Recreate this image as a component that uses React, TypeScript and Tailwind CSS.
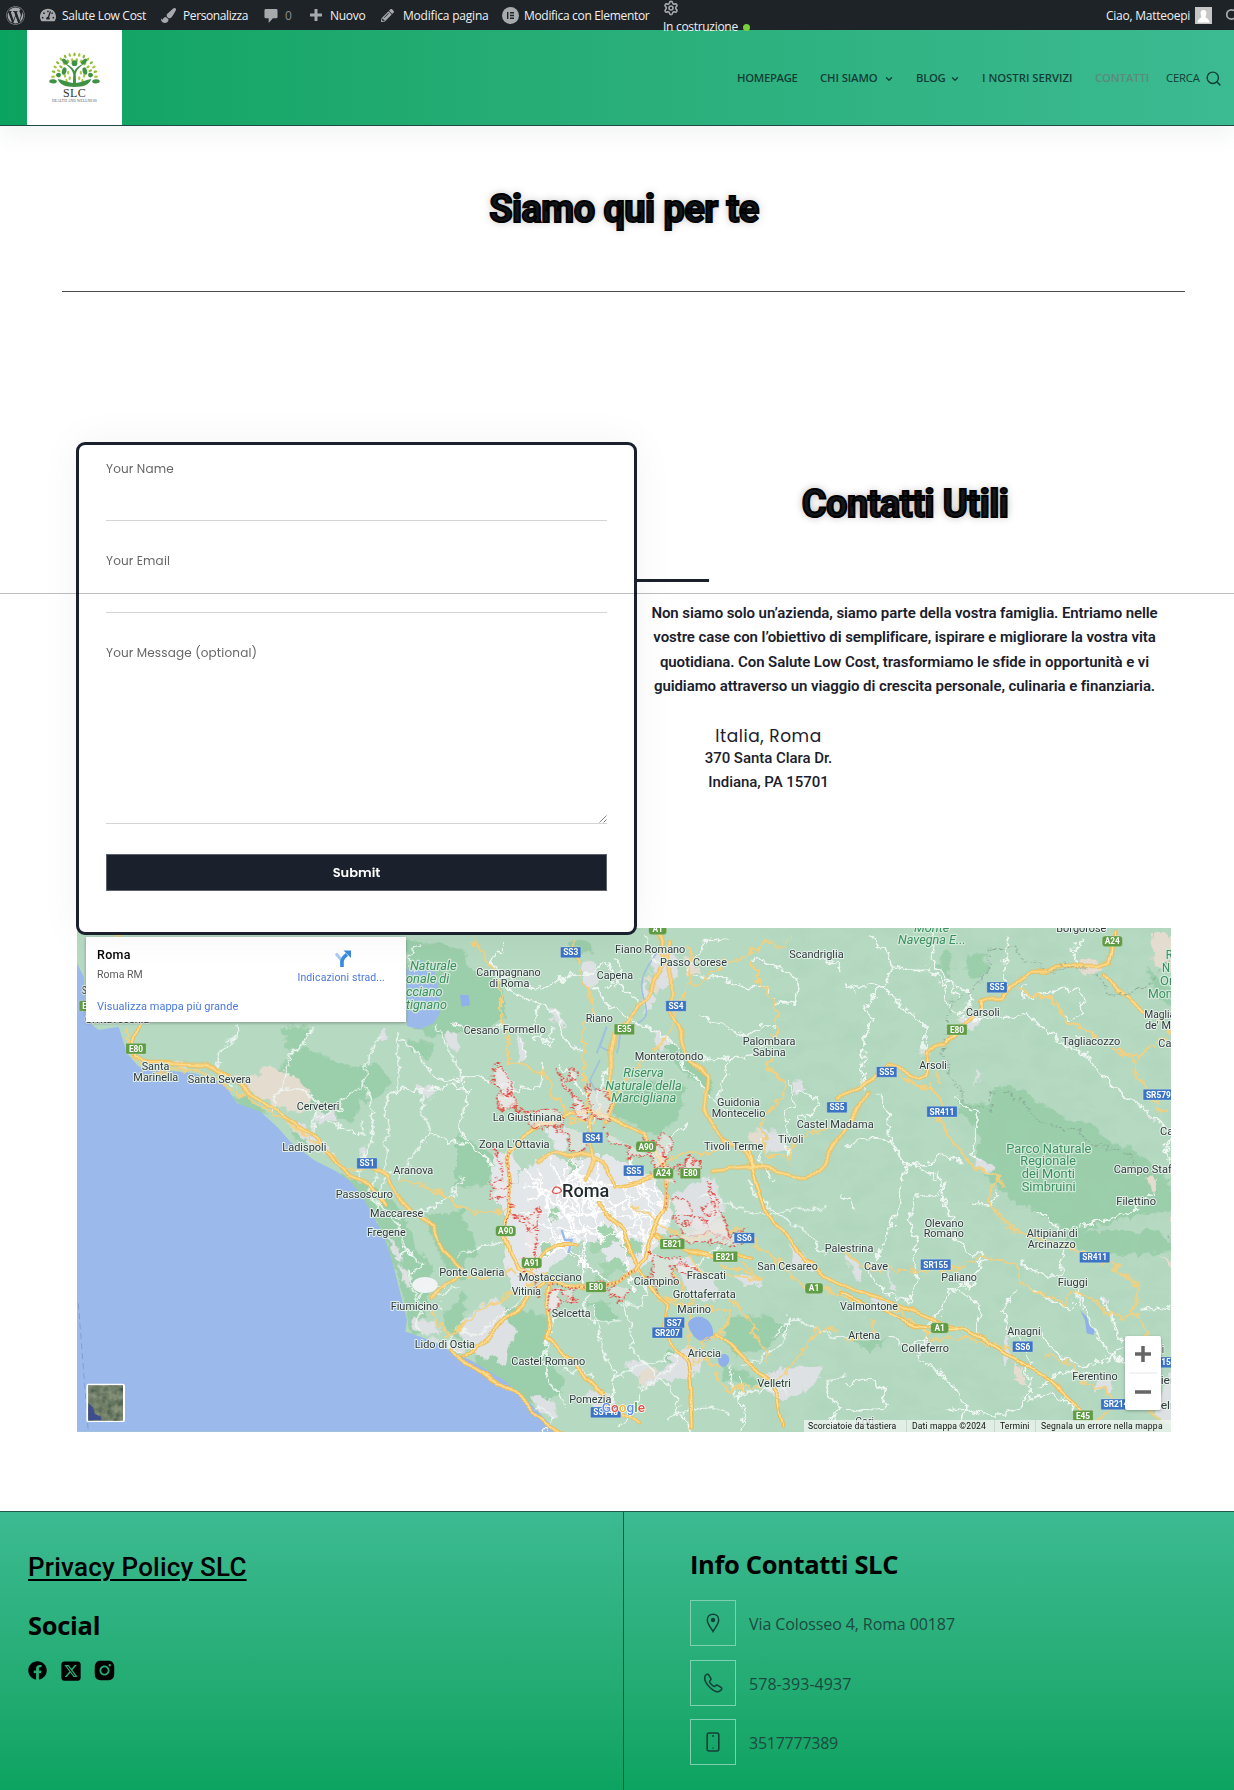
import React from "react";
import {
  FaWordpress,
  FaTachometerAlt,
  FaPaintBrush,
  FaPencilAlt,
  FaFacebook,
} from "react-icons/fa";
import { FaSquareXTwitter } from "react-icons/fa6";
import { AiFillInstagram } from "react-icons/ai";
import { ChevronDown, Search, Settings } from "lucide-react";

function Logo() {
  const leaves: number[][] = [];
  for (let i = 0; i < 15; i++) {
    const a = Math.PI + (Math.PI * i) / 14;
    leaves.push([32 + Math.cos(a) * 27, 31 + Math.sin(a) * 28, (a * 180) / Math.PI]);
  }
  for (let i = 0; i < 12; i++) {
    const a = Math.PI + (Math.PI * (i + 0.5)) / 12;
    leaves.push([32 + Math.cos(a) * 21.5, 32 + Math.sin(a) * 22, (a * 180) / Math.PI]);
  }
  return (
    <svg viewBox="0 0 64 44" className="h-[35px] w-[51px]" aria-hidden="true">
      {leaves.map(([x, y, r], i) => (
        <ellipse key={i} cx={x} cy={y} rx="2.4" ry="1.5" fill={i % 2 ? "#8dba3a" : "#a9c83c"} transform={`rotate(${r} ${x} ${y})`} />
      ))}
      {[[24, 26], [40, 26], [20, 30], [44, 30], [26, 33], [38, 33], [22, 36], [42, 36]].map(([x, y], i) => (
        <ellipse key={i} cx={x} cy={y} rx="1.4" ry="2.4" fill="#a9c83c" />
      ))}
      <g fill="#3f9146">
        <circle cx="32" cy="14" r="3.6" />
        <circle cx="12" cy="29" r="3" />
        <circle cx="52" cy="29" r="3" />
        <ellipse cx="20" cy="12" rx="4.5" ry="2.4" transform="rotate(45 20 12)" />
        <ellipse cx="44" cy="12" rx="4.5" ry="2.4" transform="rotate(-45 44 12)" />
        <ellipse cx="19" cy="24" rx="2.8" ry="4.8" transform="rotate(15 19 24)" />
        <ellipse cx="45" cy="24" rx="2.8" ry="4.8" transform="rotate(-15 45 24)" />
        <ellipse cx="5" cy="37" rx="4.8" ry="2.6" transform="rotate(5 5 37)" />
        <ellipse cx="59" cy="37" rx="4.8" ry="2.6" transform="rotate(-5 59 37)" />
        <path d="M11 34c5 1 13 4 19 5l.5-11c-1-6-6-10-11-14 6 2 11 6 12.500 10 1.500-4 6.500-8 12.500-10-5 4-10 8-11 14l.5 11c6-1 14-4 19-5-2 7-9 10-21 10S13 41 11 34z" />
      </g>
    </svg>
  );
}

function AdminBar() {
  return (
    <div className="relative z-30 flex h-[30px] items-center overflow-visible bg-[#1d2327] font-['Open_Sans','Noto_Sans',sans-serif] text-[12px] leading-none whitespace-nowrap text-[#f0f0f1]">
      <FaWordpress className="ml-[6px] size-[19px] shrink-0 text-[#a7aaad]" />
      <FaTachometerAlt className="ml-[15px] size-[16px] shrink-0 text-[#a7aaad]" />
      <span className="mt-px ml-[6px] w-[99px] shrink-0 tracking-[-0.3px]">Salute Low Cost</span>
      <FaPaintBrush className="size-[15px] shrink-0 text-[#a7aaad]" />
      <span className="mt-px ml-[7px] w-[81px] shrink-0 tracking-[-0.4px]">Personalizza</span>
      <svg viewBox="0 0 14 15" className="mt-px size-[14px] shrink-0" fill="#a7aaad">
        <path d="M1.500 0h11Q14 0 14 1.500v7Q14 10 12.500 10H9l-4.500 5V10H1.500Q0 10 0 8.500v-7Q0 0 1.500 0z" />
      </svg>
      <span className="mt-px ml-[7px] w-[24px] shrink-0 text-[#8c8f94]">0</span>
      <svg viewBox="0 0 14 14" className="size-[14px] shrink-0" fill="#a7aaad">
        <path d="M5.500 1h3v4.500H13v3H8.500V13h-3V8.500H1v-3h4.500z" />
      </svg>
      <span className="mt-px ml-[7px] w-[51px] shrink-0 tracking-[-0.3px]">Nuovo</span>
      <FaPencilAlt className="size-[13px] shrink-0 text-[#a7aaad]" />
      <span className="mt-px ml-[9px] w-[99px] shrink-0 tracking-[-0.2px]">Modifica pagina</span>
      <svg viewBox="0 0 17 17" className="size-[17px] shrink-0">
        <circle cx="8.500" cy="8.500" r="8.500" fill="#a7aaad" />
        <path d="M5.700 5v7M8 5.700h4M8 8.500h4M8 11.300h4" stroke="#1d2327" strokeWidth="1.400" />
      </svg>
      <span className="mt-px ml-[5px] w-[139px] shrink-0 tracking-[-0.32px]">Modifica con Elementor</span>
      <div className="flex h-[31px] w-[90px] shrink-0 flex-col">
        <Settings className="size-[16px] shrink-0 text-[#a7aaad]" strokeWidth={2.4} />
        <div className="mt-[5px] flex h-[10px] items-start gap-[5px] overflow-hidden">
          <span className="tracking-[-0.3px]">In costruzione</span>
          <i className="mt-[3px] size-[7px] shrink-0 rounded-full bg-[#7ad03a]" />
        </div>
      </div>
      <span className="mt-px ml-auto w-[89px] shrink-0 tracking-[-0.25px]">Ciao, Matteoepi</span>
      <svg viewBox="0 0 17 17" className="size-[17px] shrink-0">
        <rect width="17" height="17" fill="#c6c6c6" />
        <path d="M8.500 3c2 0 3 1.500 2.900 3.500-.1 1.600-.9 2.500-.9 3.400 0 1 3.500 1.300 4 5.600h-12c.5-4.300 4-4.600 4-5.600 0-.9-.8-1.800-.9-3.400C5.500 4.500 6.500 3 8.500 3z" fill="#fff" />
      </svg>
      <div className="ml-[13px] w-[9px] shrink-0 overflow-hidden">
        <Search className="size-[14px] text-[#a7aaad]" strokeWidth={3} />
      </div>
    </div>
  );
}

function Header() {
  return (
    <header className="relative z-20 flex h-[96px] items-center border-b border-[#1f4a43] bg-linear-to-r from-[#0ba360] to-[#3cba92] font-['Open_Sans','Noto_Sans',sans-serif] text-[11.3px] font-semibold whitespace-nowrap text-[#123f37] shadow-[0_10px_20px_rgba(44,62,80,0.06)]">
      <div className="ml-[27px] flex h-[95px] w-[95px] shrink-0 flex-col items-center bg-white pt-[22px]">
        <Logo />
        <span className="mt-px font-['Liberation_Serif',serif] text-[12px] leading-[11px] font-normal tracking-[0.4px] text-[#333]">SLC</span>
        <span className="font-['Liberation_Serif',serif] text-[3.6px] leading-[4px] font-normal tracking-[0.15px] text-[#555]">HEALTH AND WELLNESS</span>
      </div>
      <nav className="mt-[2px] ml-auto flex items-center">
        <a className="w-[83px] tracking-[-0.3px]">HOMEPAGE</a>
        <a className="flex w-[96px] items-center">
          <span className="w-[64px] tracking-[-0.1px]">CHI SIAMO</span>
          <ChevronDown className="size-[10px]" strokeWidth={3.2} />
        </a>
        <a className="flex w-[66px] items-center">
          <span className="w-[34px] tracking-[-0.3px]">BLOG</span>
          <ChevronDown className="size-[10px]" strokeWidth={3.2} />
        </a>
        <a className="w-[113px] tracking-[0px]">I NOSTRI SERVIZI</a>
        <a className="w-[71px] tracking-[-0.1px] text-[#5c8a7b]">CONTATTI</a>
        <a className="w-[39px] font-normal tracking-[-0.2px]">CERCA</a>
        <Search className="mr-[12px] size-[17px]" strokeWidth={2} />
      </nav>
    </header>
  );
}

function ContactForm() {
  const label = "block h-[18px] text-[12px] leading-[19px] tracking-[0.15px] text-[#666]";
  return (
    <form className="relative z-10 h-[493px] w-[561px] shrink-0 rounded-[9px] border-[3px] border-[#1a202c] bg-white px-[27px] pt-[14px] font-['Poppins','Inter',sans-serif] shadow-[0_0_40px_rgba(0,0,0,0.05)]">
      <label className={label}>Your Name</label>
      <div className="h-[44px] border-b border-[#d4d4d4]" />
      <label className={`${label} mt-[30px]`}>Your Email</label>
      <div className="h-[44px] border-b border-[#d4d4d4]" />
      <label className={`${label} mt-[30px]`}>Your Message (optional)</label>
      <div className="flex h-[163px] items-end justify-end border-b border-[#d4d4d4]">
        <svg viewBox="0 0 8 8" className="size-[8px]" stroke="#777" strokeWidth="0.9">
          <path d="M0.500 7.500l7-7M4.500 7.500l3-3" />
        </svg>
      </div>
      <div className="mt-[30px] flex h-[37px] items-center justify-center border border-[#5b606a] bg-[#1a202c] text-[13px] font-semibold text-white">
        Submit
      </div>
    </form>
  );
}

type Tile = { at: [number, number]; paths: string[] };
const T: Record<string, [number, number]> = {
  a: [0, 0], b: [1170, 0], c: [2340, 0], d: [0, 750], e: [1170, 750], f: [2340, 750],
};

const woods: Tile[] = [
  { at: T.a, paths: [
    "M1020 40l120 20 60 20v240l-60 20-100-30z", "M655 305h80l-20 50-50 20z",
    "M660 400l60-40 60 30 60 40 100-20 40 60-30 40-60 20-30 60-50-20-80-30-60-40-30-60z", "M1020 340l90 10-20 50-50-10z",
    "M500 510l50 10 60 50-30-10-50-10z", "M680 590l60 50-10 20-50-30z",
  ] },
  { at: T.b, paths: [
    "M0 80l60 60 80 20 10 120-80 40-70-10z", "M620 330l80 60 60 60 10 60-50-40-70-80z", "M470 480l120-10 100 10-20 90-60 60-90-40-60-50z",
    "M0 620l60 30 80 60-60 70H0z", "M330 60l60-20 20 40-50 20z",
  ] },
  { at: T.c, paths: [
    "M360 90l60-10 10 60-40 20-30-30z", "M290 70l40 30-20 60-30-40z",
    "M330 510l60 30 50-10 20-50 80 20 60 40 60 40 70 10 40 50 80 30 60 40 60 70 40 60-60 20-200 20-220-30-100-90-40-60 20-60-60-80z",
    "M900 130l70 50 30 10v60l-60-30z",
  ] },
  { at: T.d, paths: [
    "M830 0l70 20 90 60 60 120 50 80-30 180-30 40-50-220-60-140z", "M1080 120l120-20v220l-60-40-40-90z", "M1130 420l70-70v170l-60-60z",
  ] },
  { at: T.e, paths: [
    "M0 130l40 20 30 80-70 60z", "M130 390l150 30-10 110 60 90-60 90-220-140z", "M400 380l60 0 30 60-60 0z", "M810 420l120 0 60 40-60 60-90 20-30-50z",
    "M800 560l120 60-70 20-50-40z", "M640 520l40 20-10 60-40-20z",
  ] },
  { at: T.f, paths: [
    "M470 0h500l-30 80-80 50-100 20-70 30-60-30-120-80z", "M640 170l300 0 50 60-100 10-160-10z", "M0 480l60 20 60-10-40 40z",
  ] },
];

const towns: Tile[] = [
  { at: T.a, paths: ["M310 410l20-10 30 25-20 10z", "M665 590l50 10 80 80-60-20z", "M720 640l60 10 30 50-40-10z", "M890 660l20 10-10 40z", "M1050 485l50-10 20 20-40 30z", "M1150 310l30 20v60l-30-40z", "M940 310l30 0-10 40-20-10z", "M750 560l50 0 10 20-50 20z"] },
  { at: T.b, paths: ["M590 70l60 10 20 60-50 60-30-40z", "M560 160l40 60-30 50z", "M590 310l50 30-10 40-30-20z", "M180 330l30 10v70l-20 10z", "M930 610l60 20 20 50-70 0z", "M1015 465l30 10-10 40-20-20z", "M280 240l30 20 20 50-40-30z", "M380 120l40-10 10 60-30 20z", "M120 420l40 20 20 60-20 30-30-50z", "M360 520l40 30 0 40-30-20z"] },
  { at: T.c, paths: ["M345 290l40-30 20 30-50 40z", "M385 690l60 30-10 30-40-20z", "M230 370l25 10-10 20z", "M390 440l15 10-15 35z", "M910 560l20 20-10 10z"] },
  { at: T.d, paths: ["M970 190l40 30 0 40-20-10z", "M1000 260l30 50 0 30-20-20z", "M1040 420l80 20 0 40-70-10z", "M1090 485l110 30v30l-100-40z"] },
  { at: T.e, paths: ["M10 440l110-80 60 100-30 110-60-20-70-40z", "M690 510l60 30-30 60-90 20-60 10z", "M940 590l80-10 80-10-30 60-90 50-50-30z", "M400 640l60 10 20 50-70 10z", "M1000 200l60 50 40 40-80-20z", "M830 300l70 0 20 30-60 0z", "M230 660l60 10 10 60-50-10z", "M500 560l60-10 30 40-50 10z", "M650 250l50-10 60 60 40 60-60 20-60-60z", "M650 60l120-60 40 100-60 60-90-20z"] },
  { at: T.f, paths: ["M80 370l40 0 10 30-40 0z", "M0 240l30 20 20 60-20 0z", "M480 480l20 0-10 80-20 10z", "M960 600l32-20v180l-60-40z", "M770 600l40 10-10 40-60 0z", "M240 490l40 20-10 20-30-10z", "M130 280l20 70-20-10z", "M770 360l15 10-10 20z"] },
];

const sands: Tile[] = [
  { at: T.a, paths: ["M500 450l80 0 10-30 50 10 50 30 40 30 10 30-30 40-60-10-60-30z"] },
  { at: T.b, paths: ["M880 620l40-10 20 40-50 10z", "M570 160l30-10 10 60z", "M680 90l40 10 10 40-30 10z"] },
  { at: T.c, paths: ["M700 100l50 10 30 20-40 20-40-20z", "M915 30l75 0v120l-60-30z", "M350 280l50-10-40 60z"] },
  { at: T.e, paths: ["M545 590l60-10 10 40-60 10z", "M730 40l40 20 10 40-40-10z"] },
  { at: T.f, paths: ["M500 560l40 20 0 50-30-10z", "M900 0l40 10-20 40z", "M980 120l12 0v60z", "M940 240l52 20v20z"] },
];

const whiteRoads: Tile[] = [
  { at: T.a, paths: [
    "M525 305l-40 60-30 40 10 50 40 30", "M750 305l-50 60-30 30-10 60-20 40-20 60", "M940 330l-30 60-10 80-60 50-20 40-60 10", "M1000 320l-10 40 10 80-10 60-30 30 10 80-10 90 10 50-20 30-20 80",
    "M995 330l60 60 50 60 60 20 40-10", "M640 490l70 0 50 40-20 90", "M900 480l20 60 0 90-20 60-20 60", "M1110 300l40 60 20 60 30 40", "M985 500l120-10 60-10 40 20", "M1070 500l0 60 20 60-60 80-30 60",
    "M1090 620l60 30 50 0", "M800 590l40 20 50 20 0-40", "M1060 60l-40 40 30 40",
  ] },
  { at: T.b, paths: [
    "M150 50l-40 80 60 30 60 30 60-10 60-30 60-10 40-30 40 60 60 60", "M110 140l80 70 60 20 60 40 0 40 50 60 20 0", "M0 300l80 20 70-20", "M250 240l-20 90 60 30 0-60", "M410 190l40 40 90 60 60 30 60 40 30 60 60 80 60 50",
    "M480 110l20 40-50 40", "M720 150l80 10 70 30 50-10 30 30", "M730 270l60 20 80 40 60-30 40 0", "M700 400l60 0 40 0 80-10 60-40", "M820 400l-20 80-20 60", "M810 40l-60 0-30 60-20 30", "M900 100l60 20 60 40 10 50",
    "M960 230l40 0 30 10-10-40", "M1160 140l-20-30-60-20-60 0", "M1000 470l20 60-30 50 10 60-10 60", "M0 460l60-10 60 20 50 30 80-20 10-60", "M40 470l-10 80-20 60 60 80 40 30", "M480 390l-40 60-10 100-30 60", "M1030 500l60 20-10 40-60 20",
    "M700 590l-60 60-10 40-60 0", "M920 640l-10 60 40 60", "M1170 180l30 20", "M570 40l40 80", "M200 340l10 60", "M310 420l60 60 40 60",
  ] },
  { at: T.c, paths: [
    "M70 30l60 60 10 60-30 30-50 70 20 30-30 60 10 60-10 90", "M140 120l60 10 60 0 30 40 20 80 60 30 40 10", "M260 30l0 70 40 60 40 50", "M0 180l60 0 60 10 60 60 60 50 0 70", "M380 290l160-20 60 40 60 50 60 30 50 50 50 60 50 30 80 60 70 90",
    "M490 30l-10 100 0 60", "M100 500l30 70 0 60 50 90", "M0 660l60-20 70 10 50 60 60 10 50-30 60 20", "M540 180l0 40 60-20 60-10 50 10 10 60-40 30-20-20", "M330 510l30 40 30 20 0 60-10 60 30 20",
    "M300 170l60 20 20 40-30 30", "M700 130l-20-50 30-40", "M990 620l-30 60 20 60", "M690 330l50 20", "M170 770l20-60 80 50",
  ] },
  { at: T.d, paths: [
    "M935 0l-30 50 60 60 60 20 60-30 80-40 30-60", "M965 100l40 60 20 60 50 50-50 20 20 60 20 60 0 70", "M1000 245l50-20", "M1100 380l80-50", "M1130 400l-60 0-10-40 30-30 50 0", "M1160 480l-10 40 40 20",
  ] },
  { at: T.e, paths: [
    "M410 390l20 80 10 60 40 60-10 60-10 60", "M500 390l30 60 0 60 60 80 60 60 30 60 20 60", "M300 410l-30 110 0 80 60 90", "M410 600l-80-20", "M470 610l50-30 80-20 60-20 60 0", "M680 540l-60 60-60 40-40 80-30 30", "M830 570l-10 60 30 30 80-20 60 10",
    "M1000 420l-20 80-60 50-60 20", "M1170 600l-60 20 40 80-30 80", "M960 480l40-50 60 20 80 40 50-10", "M850 600l20 120-20 60", "M730 60l90 20 60 30 60 10 60-20 120 0", "M0 460l60 20 70-60 80-60 60-50", "M400 360l-10 60 20 20 90 0",
    "M880 20l50 70 80 60 60 30 40 60", "M640 730l60-30 60-10 60 30", "M240 700l50 20-20 60", "M800 210l-60 50-60 20", "M0 240l60-20 90-30", "M580 340l-30 60-50-20",
  ] },
  { at: T.f, paths: [
    "M170 0l-10 90-20 60-40 80-30 60 60 70 60 20 30-60-20-60 20-60-30-70 20-70 60 0 30-40", "M280 0l10 60 30 60 0 60 60 60 30 0-20 80-80 20-20 60-60 60", "M310 340l60 20 40 60-10 60", "M370 340l0-30 60-60", "M520 340l-50 60 20 60 60 60 0 120-20 60-60 20-60 0-60-20-50 0",
    "M550 340l60 30 60 30 30-20 0-40 20 80 40 60 30 60 20 10 70 20", "M240 490l-20 60 60 40 60 60 20 40-20 60", "M130 490l60 20 60-20", "M390 80l60 10 0-40", "M640 170l60-20 100-20 60-20 60-60", "M640 170l-40-50-30-10", "M650 220l0 80-60 0-60-40", "M590 480l60 70 60 20 80-20 40-40",
    "M0 60l30 40", "M890 400l60 0 42-20", "M0 630l60-20 60 30 0 60-60 0-60 10", "M580 640l60-50 100 10", "M690 710l-60-60-80 20", "M800 430l20 60 40 20 60 0", "M770 370l30 60",
  ] },
];

const thinRoads: Tile[] = [
  { at: T.a, paths: ["M180 310l20 60 30 60 60 10 100-10 90 50 80 50 100 50 60 50 60 50 60 50 80 0", "M150 40l10-16"] },
  { at: T.b, paths: [
    "M55 45l40 60 40 80 0 80 20 60 0 80 50 20 60 20 30 60 40 50 50 30", "M355 45l20 100 30 60 10 60-30 60 0 120 10 80 0 30", "M700 60l10 90-40 100-30 80-60 60-60 70-50 60", "M900 110l10 60 50 60 10 70-10 30-20 20 10 80 40 50-10 40-40 30-20 40 10 60 10 40 60 20",
    "M1010 24l-20 40-60-10-60 40-60 20-60 50-40 20", "M350 590l40-10 10-60", "M600 720l60-30 100-10 60-20", "M1000 700l0-30 60-50 60-10", "M435 550l-20 40",
  ] },
  { at: T.c, paths: ["M520 190l40 20 60 0 30 60 20 30 30 0 90 60 70 40 60-40 40-20", "M868 405l0 40 50 60 40 60", "M150 440l60 40 50 10 30 30-10 60 60 90 50 60 60 20 20 30", "M930 270l62 70", "M270 440l10 40"] },
  { at: T.d, paths: ["M1000 20l60 0 60 30 80 50", "M1100 420l50 60 50-40"] },
  { at: T.e, paths: [
    "M0 90l60 20 70 0 40-20", "M0 260l40 50 80-10 60-10", "M0 470l90-80 100-40 80-60", "M540 100l60 40 100 50 90-20 70-10 60 60 60 50 60 60 100 20 90 40", "M650 290l40 60-20 20-60 0 100 20 60 10 50 0-10 60-60 40-30 60", "M700 240l40 60 80 0 100 20-60-60",
    "M780 600l40 50 100-20 40-10 60-60 60-90 60-10", "M800 270l60 10 50 40", "M710 360l-10 100 0 60 90 60", "M820 370l60 60 60 120",
  ] },
  { at: T.f, paths: [
    "M0 230l40 40 80 15 120 0 100-10 80-30 100 25 0 40 40 40 80 20 20 20 20-40 60 20 40 40 60 20 40-10", "M460 0l-30 50 30 70 60 50 140 40 60 20 90 50 70 50-10 70 40 90 20 50", "M600 540l60 20 40 30 10 30 60 20 60 50 60-10 60 60", "M150 400l40 30 60 40-10 20", "M80 430l0 50-80 10", "M260 490l90 0 90 20 80 10", "M760 730l30-20 60-30",
  ] },
];

const highways: Tile[] = [
  { at: T.a, paths: ["M240 305l-15 60 0 50 40 10 60 0 110 5 70 50 90 50 80 60 80 50 60 70 60 60 60 25 40 60"] },
  { at: T.b, paths: ["M625 40l20 80-20 40-30 60-60 90-40 30-10 60 0 80-10 130", "M655 70l5 80 0 110 30 60 20 80 60 70-10 100 60 90 60 40 30 40", "M790 750l100-10 70 10 110 30 60-60 40-80 60-80 20-40", "M265 720l60-15 100 0 40 40 20 40", "M430 580l-10 80 10 60-20 60"] },
  { at: T.c, paths: ["M0 540l40-30 60-30 40-40 40 0 60 30 20-10 0-60 30-20 30-5 40-60 60-40 0-30 30-10 40 0 20-40 60-40 60 0 60-20 80 0 40-10 10-50 10-40", "M790 165l40 50 80 60"] },
  { at: T.d, paths: ["M935-10l50 25 20 50 60 60 50 50 20 50 60 60 10 30", "M1110 380l90-65"] },
  { at: T.e, paths: ["M890-60l40 130 20 60 60 70 60 70 50 50 80 40 120 35 150 60 60 20", "M470 0l20 50 160-35", "M440 100l80 80 20 60 30 60 50 80 30 30-10 80 70 90 10 60 5 130", "M620 200l100 40 60 20 120 5", "M380 225l-60 0-40 20-40 50", "M300 340l-10 160 60 70 60 60 60 60 40 40 60 30", "M50 560l180-170 60-60", "M0 540l80 60 100 60 80 70 70 60", "M800 490l90 90 60 40 30 60 20 90"] },
  { at: T.f, paths: ["M0 375l230 90 80 10 60 0 240 140 110 100 40 30"] },
];

const ring = "M650 780L640 725 580 640 520 612 470 590 420 570 350 590 270 612 225 645 185 690 176 740 182 820 165 900 162 940 180 1000 205 1050 250 1065 310 1085 400 1098 450 1100 510 1085 560 1055 585 1020 600 970 620 920 645 860 650 780z";

const boundary = [
  "M110 430l30-15 20 40 5 50 20 20-50 30-10-30 30-10-40-40z", "M180 540l30 30 70-15 20-10 20 20 0 40-60 10-40-20z", "M300 430l20 50 60 50 20 40-10 10-40-30 10-30z", "M340 435l25 5-5 30-25-5z", "M390 490l60 0 20 40-10 50-25 10-25-40z",
  "M270 610l60 10 20 40 0 20 40-10 5-50", "M105 660l30 40 0 60-30 30 0 40 40-20 30 30", "M640 740l40-30 50 0 0 30-40 10 0-40z", "M580 740l60-20 20 60", "M760 770l25 60 20 60 20 50-60-10-20-30 20-30z",
  "M650 820l60 10-10 40-50 5 30 25 40-20 40 10 0 30-50 10-40-20", "M740 845l30-10 10 30-30 10z", "M800 880l20 50 50-20-10 50-90-10-60 0-60-20-20 20", "M200 890l50-45-10 60 0 40-10 40 20 30-10 40 10 60", "M180 870l60 30-20 20z", "M105 770l20 20 50-15",
  "M590 980l20 20 60-10 20 30-50 0 20 60-60-20-20 20 10-60z", "M670 1010l50 20-20 20-50-20z", "M590 1040l15 70", "M200 1000l10 40-10 20", "M280 1100l-10 40 30 20 20-60z", "M320 1100l40-10 0 40-30-10z", "M410 1090l10-20 30 0 10 30", "M470 1090l20 40 30-40 0-10", "M450 620l10 30 60 10 0 40 60-10", "M600 650l20-30 40 30-30 40z",
  "M560 640l50 20 30 40-40 30z", "M130 500l50 10 0 40-50-5z", "M700 700l20 20-20 25-20-15z",
];

type Label = [string, number, number, number];
const labels: { at: [number, number]; items: Label[] }[] = [
  { at: T.a, items: [["Santa", 245, 328, 450], ["Marinella", 220, 355, 483], ["Santa Severa", 383, 573, 489], ["Cerveteri", 710, 838, 569], ["Ladispoli", 667, 799, 693], ["Aranova", 1000, 1120, 762], ["Civitavecchia", 75, 268, 309], ["S", 66, 80, 221]] },
  { at: T.b, items: [["Fiano Romano", 495, 706, 98], ["Passo Corese", 630, 831, 139], ["Scandriglia", 1018, 1181, 114], ["Campagnano", 79, 272, 167], ["di Roma", 118, 238, 200], ["Capena", 440, 549, 178], ["Riano", 407, 489, 305], ["Cesano", 41, 148, 342], ["Formello", 158, 287, 338], ["Monterotondo", 554, 760, 420], ["Palombara", 878, 1036, 374], ["Sabina", 908, 1007, 407], ["Guidonia", 801, 930, 559], ["Montecelio", 785, 946, 592], ["Castel Madama", 1040, 1271, 625], ["La Giustiniana", 128, 336, 602], ["Zona L'Ottavia", 87, 299, 683], ["Tivoli Terme", 762, 940, 689], ["Tivoli", 984, 1060, 670]] },
  { at: T.c, items: [["Borgorose", 649, 799, 36], ["Carsoli", 378, 479, 289], ["Magliano", 913, 1040, 294], ["de' Marsi", 915, 1046, 328], ["Tagliacozzo", 666, 841, 374], ["Capistrello", 955, 1110, 382], ["Arsoli", 238, 321, 446], ["Campo Staffi", 821, 1012, 760], ["Canistro", 960, 1085, 644]] },
  { at: T.d, items: [["Passoscuro", 827, 999, 84], ["Maccarese", 930, 1090, 140], ["Fregene", 921, 1037, 198], ["Fiumicino", 992, 1135, 420], ["Lido di Ostia", 1064, 1245, 534], ["Ponte Galeria", 1138, 1333, 317]] },
  { at: T.e, items: [["Mostacciano", 206, 395, 333], ["Vitinia", 185, 273, 375], ["Selcetta", 305, 422, 440], ["Castel Romano", 184, 406, 584], ["Pomezia", 358, 484, 699], ["Ciampino", 551, 688, 344], ["Frascati", 710, 828, 328], ["Grottaferrata", 668, 857, 385], ["Marino", 682, 783, 429], ["Ariccia", 713, 813, 561], ["Velletri", 922, 1023, 652], ["San Cesareo", 922, 1104, 300], ["Palestrina", 1124, 1270, 247]] },
  { at: T.f, items: [["Olevano", 254, 371, 170], ["Romano", 251, 372, 202], ["Cave", 72, 144, 300], ["Paliano", 304, 411, 333], ["Altipiani di", 560, 713, 200], ["Arcinazzo", 563, 707, 233], ["Filettino", 829, 948, 104], ["Fiuggi", 653, 743, 349], ["Valmontone", 0, 174, 419], ["Artena", 25, 120, 506], ["Colleferro", 184, 327, 545], ["Anagni", 502, 602, 496], ["Ferentino", 697, 833, 630], ["i", 965, 972, 549], ["ien", 962, 1010, 643], ["eln", 962, 1010, 718], ["Cori", 46, 102, 766]] },
];

const parks: { at: [number, number]; italic: boolean; items: Label[] }[] = [
  { at: T.a, italic: true, items: [["Naturale", 1050, 1190, 150], ["onale di", 1038, 1168, 188], ["cciano", 1038, 1148, 227], ["tignano", 1038, 1161, 266]] },
  { at: T.b, italic: true, items: [["e", 0, 20, 150], ["Riserva", 520, 641, 471], ["Naturale della", 466, 695, 509], ["Marcigliana", 484, 679, 547]] },
  { at: T.c, italic: true, items: [["Monte", 222, 328, 36], ["Navegna E...", 174, 377, 73]] },
  { at: T.c, italic: false, items: [["Parco Naturale", 499, 754, 698], ["Regionale", 541, 708, 736], ["dei Monti", 545, 705, 775], ["Simbruini", 545, 707, 814], ["R", 977, 998, 118], ["N", 966, 990, 156], ["Or", 960, 1000, 195], ["Mont", 924, 1010, 234]] },
];

type Shield = [string, number, number, boolean];
const shields: { at: [number, number]; items: Shield[] }[] = [
  { at: T.a, items: [["E80", 228, 386, true], ["SS1", 921, 730, false], ["E80", 88, 258, true]] },
  { at: T.b, items: [["A1", 623, 28, true], ["SS3", 362, 97, false], ["SS4", 678, 258, false], ["E35", 523, 328, true], ["SS4", 428, 653, false], ["A90", 588, 680, true], ["SS5", 551, 752, false], ["A24", 640, 760, true], ["E80", 721, 760, true], ["SS5", 1161, 562, false]] },
  { at: T.c, items: [["A24", 817, 64, true], ["SS5", 471, 202, false], ["E80", 351, 329, true], ["SS5", 140, 456, false], ["SR411", 306, 575, false], ["SR579", 955, 524, false]] },
  { at: T.e, items: [["A90", 167, 183, true], ["A91", 245, 279, true], ["E80", 438, 351, true], ["E821", 667, 222, true], ["E821", 826, 260, true], ["SS6", 883, 204, false], ["A1", 1092, 355, true], ["SS7", 673, 458, false], ["SR207", 652, 488, false], ["SS148", 467, 727, false]] },
  { at: T.f, items: [["SR155", 287, 284, false], ["SR411", 764, 262, false], ["A1", 299, 474, true], ["SS6", 548, 530, false], ["E45", 729, 737, true], ["SR214", 828, 703, false], ["155", 985, 577, false]] },
];

function Layer({ tiles, ...rest }: { tiles: Tile[] } & React.SVGProps<SVGGElement>) {
  return (
    <g {...rest}>
      {tiles.map((t, i) => (
        <g key={i} transform={`translate(${t.at[0]} ${t.at[1]})`}>
          {t.paths.map((d, j) => (
            <path key={j} d={d} />
          ))}
        </g>
      ))}
    </g>
  );
}

function RomeMap() {
  return (
    <svg viewBox="51 24 3282 1512" className="block h-[504px] w-[1094px]" fontFamily="Roboto, sans-serif">
      <defs>
        <filter id="relief" x="0" y="0" width="100%" height="100%">
          <feTurbulence type="fractalNoise" baseFrequency="0.012 0.018" numOctaves="3" seed="8" />
          <feColorMatrix values="0 0 0 0 0.35  0 0 0 0 0.6  0 0 0 0 0.45  1.6 0 0 0 -0.72" />
        </filter>
        <filter id="ground" x="0" y="0" width="100%" height="100%">
          <feTurbulence type="fractalNoise" baseFrequency="0.05" numOctaves="3" seed="3" />
          <feColorMatrix values="0.45 0 0 0 -0.02  0.45 0 0 0 0.03  0.3 0 0 0 0.02  0 0 0 0 1" />
        </filter>
        <filter id="wander" filterUnits="userSpaceOnUse" x="0" y="0" width="3400" height="1600">
          <feTurbulence type="turbulence" baseFrequency="0.022" numOctaves="3" seed="5" result="n" />
          <feDisplacementMap in="SourceGraphic" in2="n" scale="34" xChannelSelector="R" yChannelSelector="G" />
          <feOffset dx="8" dy="8" />
        </filter>
        <filter id="curve" filterUnits="userSpaceOnUse" x="0" y="0" width="3400" height="1600">
          <feTurbulence type="fractalNoise" baseFrequency="0.012" numOctaves="2" seed="4" result="n" />
          <feDisplacementMap in="SourceGraphic" in2="n" scale="34" xChannelSelector="R" yChannelSelector="G" />
        </filter>
      </defs>
      <rect x="51" y="24" width="3282" height="1512" fill="#b5d9c1" />
      <g filter="url(#wander)">
        <Layer tiles={woods} fill="#9bceaa" />
      </g>
      <rect x="2100" y="24" width="1233" height="1512" filter="url(#relief)" opacity="0.28" />
      <g filter="url(#wander)">
        <Layer tiles={sands} fill="#e3dccf" />
        <Layer tiles={towns} fill="#dde1e3" />
      </g>
      <path d="M51 130l20 40 5 130 40 30 60-10 25 80 35 40 65 10 100 10 90 30 40 60 70 25 50 45 40 45 70 55 70 35 40 30 30 35 40 70 35 70 25 80 20 80 20 80-5 35 45 15 50 20 50 30 50 20 100 60 80 70 80 85H51z" fill="#9cb9eb" />
      <path d="M55 1150l30 386" stroke="#7f9fd6" strokeWidth="3" strokeDasharray="18 12" fill="none" />
      <path d="M1040 150l40-30 40 20 15 60 5 80-20 30-40 18-40-10z" fill="#9cb9eb" />
      <path d="M1200 225l25 0 5 30-25 5z M1890 1200c30-25 70 0 70 40 0 35-50 30-65 0-10-20-15-30-5-40z M1975 1310c20-20 40 0 30 20-10 20-35 10-30-20z M3060 1170l20 20 10 30 15 10-5 15-20-5-5-40z" fill="#8fb0ea" />
      <path d="M1670 400c20-50-10-60 40-80s60-30 40-90 20-100 60-160M1610 400l30-80-20 60 40 20M1620 420l-30 60 20 40" stroke="#9fc1dd" strokeWidth="5" fill="none" />
      <g filter="url(#wander)">
        <path d="M1350 790l20-60 80-40 60 20 80-20 60 0 60 40 50 20 50 60 5 60-30 80-30 60-60 40-60-40-40-60-50-10-40 50-60 40-80 80-20-10-20-60-10-90z M1280 690l60-20 20 60-30 170-40-90z M1440 620l60-10 10 60-30 10z M1440 1100l50-10-20 70-30-30z" fill="#e4e7ea" />
        <path d="M1440 845l30 0 10 30-30 20z M1590 900l50 0 20 50-40 0z M1570 950l60-10 10 30-60 10z M1660 960l60-20 20 40-60 10z M1500 700l40 20-20 30z M1420 960l30-20 10 40-30 20z M1610 1010l60-10 20 30-60 20z M1580 1060l40-30 20 20-30 20z" fill="#a4d3b0" />
        <g transform="translate(1170 0)" fill="none" stroke="#fff" strokeWidth="5" strokeLinejoin="round">
          <path d="M280 700l60 120 50 100-20 100M340 700l-40 130 60 80-90 80M200 780l120 20 150-20 160 20M190 860l120 10 130 0 200 10M210 960l150-30 120 0 120 0M470 850l30 100 20 90 20 60M500 780l40 80 30 80 0 60M560 760l30 90-10 90M390 900l-10 180-30 20M350 700l60 160 40 100M250 730l40 200 60 60M380 700l-20 90 100 60 100-40M220 820l90-30 60-60M420 780l60 60 100 20 60 30M300 900l60 30 90-40M260 1000l80-60 30 0M520 700l10 90 90 50M600 760l20 90-30 110M230 880l100 60 60 80 80 50M440 700l-30 120 20 100M200 730l70 60 10 80M480 940l60-50 90 0M330 760l160 20" />
          <path d="M230 770l70 70 60 20 60 10 40-10M280 800l80-50 90 20M310 820l40 100 80 10M330 800l90 40M320 840l110-60M350 780l20 90M390 770l-10 100M410 770l20 90M340 880l80-20" strokeWidth="6" />
        </g>
      </g>
      <path d="M1505 930l10 30 20 0-10 40" stroke="#9cb9eb" strokeWidth="7" fill="none" />
      <ellipse cx="1095" cy="1095" rx="38" ry="24" fill="#f0f2f4" />
      <g filter="url(#wander)">
        <Layer tiles={whiteRoads} fill="none" stroke="#f0f7f3" strokeWidth="5" strokeLinejoin="round" strokeLinecap="round" />
      </g>
      <g filter="url(#wander)">
        <Layer tiles={thinRoads} fill="none" stroke="#f3d07f" strokeWidth="7" strokeLinejoin="round" strokeLinecap="round" />
      </g>
      <g filter="url(#curve)">
        <Layer tiles={highways} fill="none" stroke="#eebb57" strokeWidth="12" strokeLinejoin="round" strokeLinecap="round" />
        <Layer tiles={highways} fill="none" stroke="#ffe094" strokeWidth="5" strokeLinejoin="round" strokeLinecap="round" />
        <g transform="translate(1170 0)" fill="none" strokeLinejoin="round">
          <path d={ring} stroke="#eebb57" strokeWidth="13" />
          <path d={ring} stroke="#ffe094" strokeWidth="6" />
          <path d="M300 1095l100 3 50 2 60-15 50-30" stroke="#e2473d" strokeWidth="5" strokeDasharray="0 11" strokeLinecap="round" />
          <path d="M162 940l20-120-6-80 10-50M650 780l-5 80" stroke="#e2473d" strokeWidth="5" strokeDasharray="0 11" strokeLinecap="round" />
        </g>
      </g>
      <g filter="url(#wander)">
        <g transform="translate(1170 0)" fill="#eee7e8" fillOpacity="0.6" stroke="#e2473d" strokeWidth="6.5" strokeDasharray="0 11" strokeLinecap="round" strokeLinejoin="round">
          {boundary.map((d, i) => (
            <path key={i} d={d} />
          ))}
        </g>
      </g>
      <g filter="url(#wander)">
        <path d="M2760 70l20 0 60 0 60 40 60 30 40-20 60 10 60 50 20 30 40-10 60-10 40-60 80-40M2765 72l10 40-30 60-70 50-20 10-20 160 20 60 30 50 30 50 60 0 0-50 40 0 60 30 40 50 60 20 70 20 40 40 90 20 70 70M3333 880l-20 60 15 60" fill="none" stroke="#86a594" strokeWidth="3.500" strokeDasharray="7 7" />
      </g>
      <path d="M1480 808c5-12 20-8 25 5-5 8-25 10-28 2z" fill="none" stroke="#d9534a" strokeWidth="4" />
      {labels.map((g, i) => (
        <g key={i} transform={`translate(${g.at[0]} ${g.at[1]})`} fontSize="32" fill="#2f3a3c" stroke="#e6f1ea" strokeWidth="6" strokeLinejoin="round" paintOrder="stroke">
          {g.items.map(([t, x0, x1, y]) => (
            <text key={t + y} x={x0} y={y} textLength={x1 - x0} lengthAdjust="spacingAndGlyphs">{t}</text>
          ))}
        </g>
      ))}
      {parks.map((g, i) => (
        <g key={i} transform={`translate(${g.at[0]} ${g.at[1]})`} fontSize="36" fontStyle={g.italic ? "italic" : "normal"} fill="#3c8f60" stroke="#d3eadb" strokeWidth="7" strokeLinejoin="round" paintOrder="stroke">
          {g.items.map(([t, x0, x1, y]) => (
            <text key={t + y} x={x0} y={y} textLength={x1 - x0} lengthAdjust="spacingAndGlyphs">{t}</text>
          ))}
        </g>
      ))}
      <text x="1506" y="831" fontSize="54" fontWeight="500" textLength="142" lengthAdjust="spacingAndGlyphs" fill="#222b2e" stroke="#fff" strokeWidth="7" paintOrder="stroke">Roma</text>
      {shields.map((g, i) => (
        <g key={i} transform={`translate(${g.at[0]} ${g.at[1]})`}>
          {g.items.map(([t, cx, cy, green]) => {
            const w = t.length === 2 ? 54 : t.length === 3 ? 61 : t.length === 4 ? 74 : 91;
            return (
              <g key={t + cx}>
                <rect x={cx - w / 2} y={cy - 16} width={w} height="32" rx={green ? (t[0] === "A" ? 9 : 3) : 2} fill={green ? "#5f9d45" : "#3b74c4"} stroke="#ffffff" strokeOpacity="0.35" strokeWidth="2" />
                <text x={cx} y={cy + 9} textAnchor="middle" fontSize="25" fontWeight="700" fill="#fff">{t}</text>
              </g>
            );
          })}
        </g>
      ))}
      <g fontSize="37" fontWeight="500" stroke="#fff" strokeWidth="4" paintOrder="stroke">
        <text x="1625" y="1476" textLength="130" lengthAdjust="spacingAndGlyphs">
          <tspan fill="#5b8def">G</tspan>
          <tspan fill="#e25141">o</tspan>
          <tspan fill="#f0b72f">o</tspan>
          <tspan fill="#5b8def">g</tspan>
          <tspan fill="#46a35e">l</tspan>
          <tspan fill="#e25141">e</tspan>
        </text>
      </g>
      <g>
        <rect x="79" y="1391" width="116" height="116" rx="7" fill="#fff" />
        <rect x="85" y="1397" width="104" height="104" fill="#3f4f3f" />
        <rect x="85" y="1397" width="104" height="104" filter="url(#ground)" opacity="0.8" />
        <path d="M85 1450l12 10 8 22 18 8 0 11H85z" fill="#3f4d8c" />
      </g>
    </svg>
  );
}

function MapSection() {
  return (
    <section className="relative -mt-[7px] ml-[77px] h-[504px] w-[1094px] overflow-hidden">
      <RomeMap />
      <div className="absolute top-[9px] left-[9px] flex h-[85px] w-[320px] justify-between bg-white pr-[21px] pl-[11px] font-['Roboto',sans-serif] shadow-[0_1px_3px_rgba(0,0,0,0.3)]">
        <div className="pt-[10px] whitespace-nowrap">
          <div className="text-[12.500px] leading-[16px] font-medium tracking-[0.3px] text-black">Roma</div>
          <div className="mt-[4px] text-[10.500px] leading-[16px] text-[#5b5b5b]">Roma RM</div>
          <div className="mt-[16px] text-[11px] leading-[16px] tracking-[0.03px] text-[#4a78dc]">Visualizza mappa più grande</div>
        </div>
        <div className="flex flex-col items-center pt-[13px]">
          <svg viewBox="0 0 16 17" className="ml-[4px] h-[17px] w-[16px]">
            <path d="M6.500 17V10L1 3.500" fill="none" stroke="#a8cbf5" strokeWidth="3" />
            <path d="M7 17v-5c0-3 1.500-5 5-7.500" fill="none" stroke="#3b8be0" strokeWidth="3.600" />
            <path d="M8.500 0.500H16V8z" fill="#3b8be0" />
          </svg>
          <span className="mt-[3px] text-[10.500px] leading-[15px] tracking-[0.120px] text-[#4a78dc]">Indicazioni strad...</span>
        </div>
      </div>
      <div className="absolute right-[10px] bottom-[22px] flex h-[74px] w-[36px] flex-col items-center rounded-[2px] bg-white shadow-[0_1px_3px_rgba(0,0,0,0.3)]">
        <svg viewBox="0 0 36 74" className="h-[74px] w-[36px]" stroke="#666" strokeWidth="3.500">
          <path d="M10 18h16M18 10v16M10 56h16" />
          <path d="M4 37h28" stroke="#e6e6e6" strokeWidth="1" />
        </svg>
      </div>
      <div className="absolute right-0 bottom-0 flex h-[12px] items-center bg-[#f0f5f2]/75 pl-[4px] font-['Roboto',sans-serif] text-[8.600px] leading-[12px] tracking-[0.120px] whitespace-nowrap text-[#111]">
        <span className="w-[98px]">Scorciatoie da tastiera</span>
        <span className="w-[88px] border-l border-black/10 pl-[5px]">Dati mappa ©2024</span>
        <span className="w-[41px] border-l border-black/10 pl-[5px]">Termini</span>
        <span className="w-[136px] border-l border-black/10 pl-[5px] tracking-[0.200px]">Segnala un errore nella mappa</span>
      </div>
    </section>
  );
}

function InfoRow({ icon, text, tracking }: { icon: React.ReactNode; text: string; tracking: string }) {
  return (
    <div className="flex items-center gap-[13px]">
      <div className="flex size-[46px] items-center justify-center border border-[#7fd0b0] text-[#123f37]">{icon}</div>
      <span className={`mt-[2px] text-[16px] text-[#1c4a40] ${tracking}`}>{text}</span>
    </div>
  );
}

function Footer() {
  return (
    <footer className="mt-[79px] flex h-[279px] border-t border-[#22594b] bg-linear-to-t from-[#0ba360] to-[#3cba92] font-['Open_Sans','Noto_Sans',sans-serif]">
      <div className="w-[624px] border-r border-[#1f5245] pt-[37px] pl-[28px] text-black">
        <h2 className="font-['Roboto',sans-serif] text-[26px] leading-[36px] font-medium tracking-[0.2px] underline decoration-2 underline-offset-[3px]">Privacy Policy SLC</h2>
        <h2 className="mt-[22px] text-[25.500px] leading-[36px] font-bold tracking-[-0.3px]">Social</h2>
        <div className="mt-[15px] flex items-center gap-[13px]">
          <FaFacebook className="size-[19px]" />
          <FaSquareXTwitter className="-mr-px size-[22px]" />
          <AiFillInstagram className="-mx-[2px] size-[25px]" />
        </div>
      </div>
      <div className="pt-[34px] pl-[66px]">
        <h2 className="text-[25.500px] leading-[36px] font-bold tracking-[-0.350px] text-black">Info Contatti SLC</h2>
        <div className="mt-[18px] flex flex-col gap-[13.5px]">
          <InfoRow
            text="Via Colosseo 4, Roma 00187"
            tracking="tracking-[-0.1px]"
            icon={
              <svg viewBox="0 0 20 20" className="size-[20px]" fill="none" stroke="currentColor" strokeWidth="1.500">
                <path d="M10 1.200c-3.300 0-5.700 2.500-5.700 5.700 0 4 3.600 7.600 5.700 11.600 2.100-4 5.700-7.600 5.700-11.600 0-3.200-2.400-5.700-5.700-5.700z" />
                <circle cx="10" cy="7" r="2.200" fill="currentColor" stroke="none" />
              </svg>
            }
          />
          <InfoRow
            text="578-393-4937"
            tracking="tracking-[0.05px]"
            icon={
              <svg viewBox="0 0 20 20" className="size-[20px]" fill="none" stroke="currentColor" strokeWidth="1.500" strokeLinejoin="round">
                <path d="M2.300 2.600C3.500 1 5 .9 5.700 2l2 3.200c.5.900.2 1.700-.5 2.300-.9.700-.8 1.300-.3 2.100 1 1.600 2 2.600 3.500 3.500.8.500 1.400.6 2.100-.3.600-.7 1.400-1 2.300-.5l3.200 2c1.100.7 1 2.200-.6 3.400-2.200 1.700-6.300.8-10.400-3.200C2.800 10.400 1 5.600 2.300 2.600z" />
              </svg>
            }
          />
          <InfoRow
            text="3517777389"
            tracking="tracking-[-0.25px]"
            icon={
              <svg viewBox="0 0 20 20" className="size-[20px]" fill="none" stroke="currentColor" strokeWidth="1.600">
                <rect x="4.200" y="1" width="11.600" height="18" rx="2" />
                <path d="M9 4h2M9.500 16h1" />
              </svg>
            }
          />
        </div>
      </div>
    </footer>
  );
}

export default function App() {
  return (
    <div className="min-h-[1790px] w-[1234px] overflow-hidden bg-white">
      <AdminBar />
      <Header />
      <h1 className="mt-[57px] ml-[14px] text-center font-['Roboto',sans-serif] text-[38px] leading-[52px] font-bold tracking-[-0.550px] text-[#10161c] [-webkit-text-stroke:2px_#000] [text-shadow:0_0_8px_rgba(0,0,0,0.3)]">
        Siamo qui per te
      </h1>
      <div className="mt-[56px] ml-[62px] h-px w-[1123px] bg-[#4a4a4a]" />

      <section className="relative mt-[150px] flex pl-[76px]">
        <ContactForm />
        <div className="flex-1 font-['Roboto',sans-serif] text-[#1a202c]">
          <h2 className="mt-[36px] w-[535px] pl-[1px] text-center text-[38px] leading-[52px] font-bold tracking-[-0.550px] text-[#15181c] [-webkit-text-stroke:2px_#000] [text-shadow:0_0_8px_rgba(0,0,0,0.35)]">
            Contatti Utili
          </h2>
          <div className="mt-[49px] h-[3px] w-[72px] bg-[#1a202c]" />
          <p className="mt-[19px] w-[535px] text-center text-[15px] leading-[24.4px] font-semibold tracking-[-0.080px] whitespace-nowrap">
            Non siamo solo un’azienda, siamo parte della vostra famiglia. Entriamo nelle
            <br />
            vostre case con l’obiettivo di semplificare, ispirare e migliorare la vostra vita
            <br />
            quotidiana. Con Salute Low Cost, trasformiamo le sfide in opportunità e vi
            <br />
            guidiamo attraverso un viaggio di crescita personale, culinaria e finanziaria.
          </p>
          <div className="mt-[27px] w-[263px] text-center text-[15px] leading-[24px] font-medium tracking-[-0.050px]">
            <div className="font-['Poppins','Inter',sans-serif] text-[17px] leading-[20px] font-normal tracking-[0.550px]">Italia, Roma</div>
            <div>370 Santa Clara Dr.</div>
            <div>Indiana, PA 15701</div>
          </div>
        </div>
        <div className="absolute top-[151px] left-0 z-20 h-px w-full bg-black/25" />
      </section>

      <MapSection />
      <Footer />
    </div>
  );
}
